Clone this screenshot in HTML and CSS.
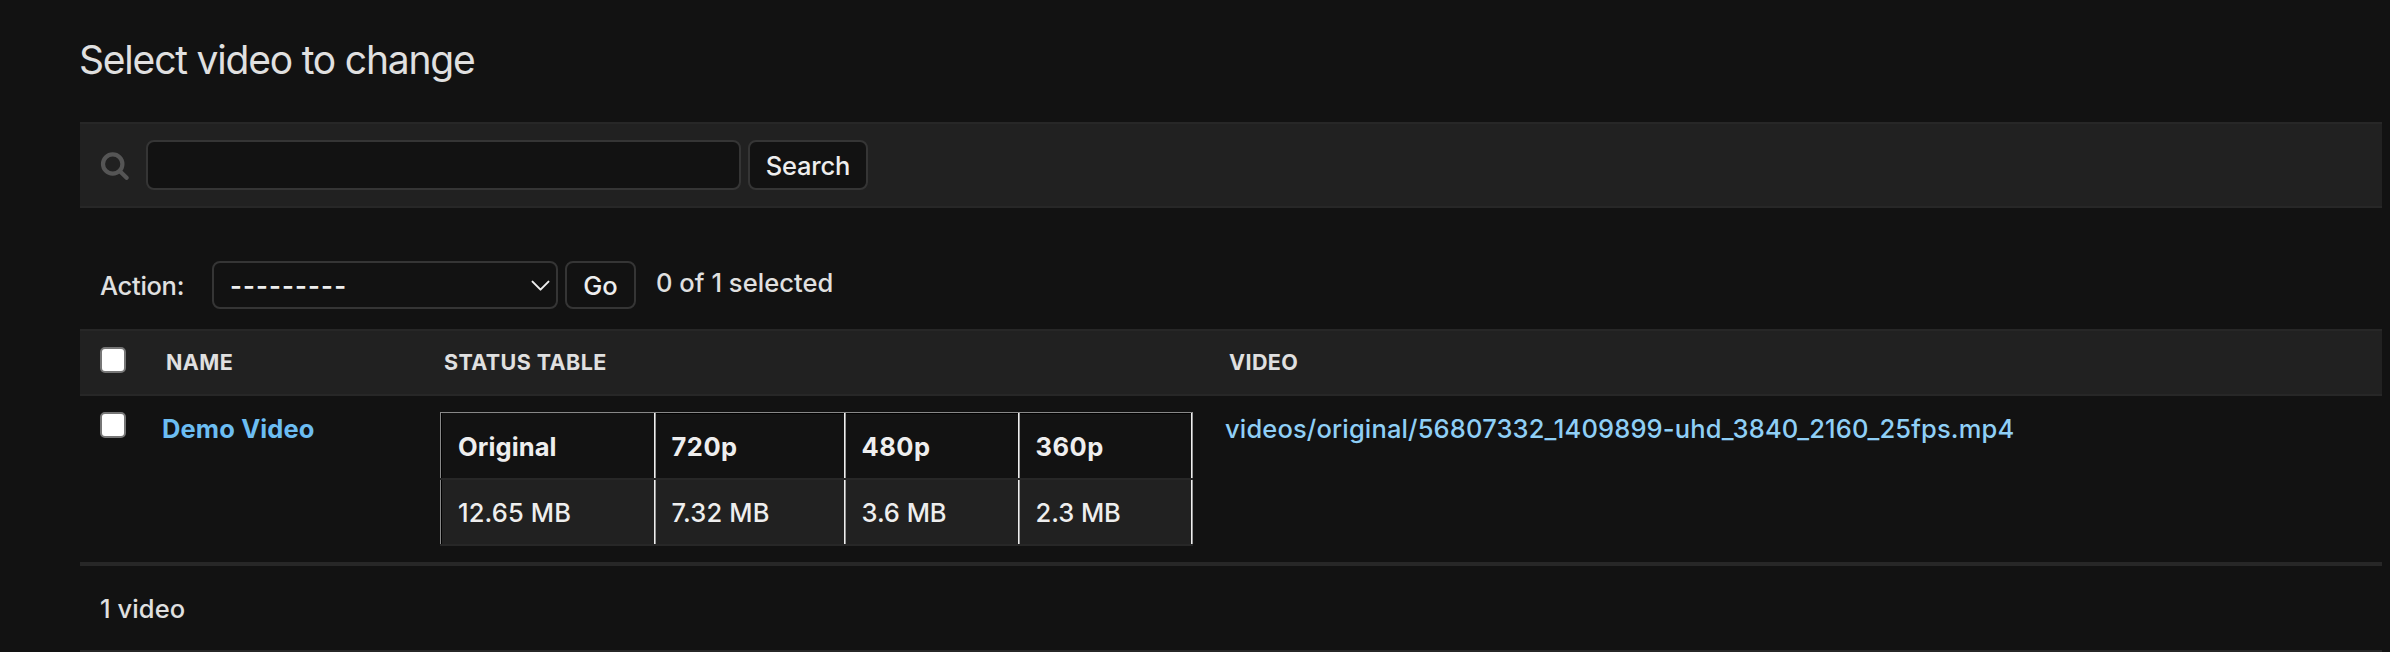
FILE: index.html
```html
<!DOCTYPE html>
<html lang="en">
<head>
<meta charset="utf-8">
<title>Select video to change</title>
<link rel="stylesheet" href="styles.css">
</head>
<body>
<main class="content">
  <h1 class="title">Select video to change</h1>
  <form class="toolbar">
    <svg class="search-icon" width="30" height="30" viewBox="0 0 30 30" fill="none" stroke="#555" stroke-width="4.2" stroke-linecap="round"><circle cx="12.7" cy="14" r="9.7"/><path d="M20.2 21.4 26.6 27.8"/></svg>
    <input class="search-input" type="text" aria-label="Search">
    <button class="button search-button" type="button">Search</button>
  </form>
  <div class="actions">
    <span class="action-label">Action:</span>
    <div class="select"><span class="dashes">---------</span><svg width="19" height="12" viewBox="0 0 19 12" fill="none" stroke="#eee" stroke-width="2" stroke-linecap="round" stroke-linejoin="round"><path d="M1.5 1.6 9.5 9.6 17.5 1.6"/></svg></div>
    <button class="button go-button" type="button">Go</button>
    <span class="counter">0 of 1 selected</span>
  </div>
  <div class="row head">
    <span class="check"></span>
    <span class="th">Name</span>
    <span class="th">Status table</span>
    <span class="th">Video</span>
  </div>
  <div class="row result">
    <span class="check"></span>
    <a class="name">Demo Video</a>
    <div class="status">
      <div class="status-row status-head"><span class="wide">Original</span><span>720p</span><span>480p</span><span>360p</span></div>
      <div class="status-row status-body"><span class="size">12.65 MB</span><span class="size">7.32 MB</span><span>3.6 MB</span><span>2.3 MB</span></div>
    </div>
    <a class="file">videos/original/56807332_1409899-uhd_3840_2160_25fps.mp4</a>
  </div>
  <p class="paginator">1 video</p>
</main>
</body>
</html>
```
FILE: styles.css
```css
* { box-sizing: border-box; }

body {
  margin: 0;
  height: 652px;
  overflow: hidden;
  background: #121212;
  color: #e0e0e0;
  font: 450 25.5px/30px Inter, Roboto, sans-serif;
}

.content { padding: 36px 8px 0 80px; }

.title {
  margin: 0 0 38px -1px;
  font-size: 39px;
  line-height: 48px;
  font-weight: 400;
  letter-spacing: -1.2px;
}

.toolbar {
  display: flex;
  align-items: flex-start;
  height: 86px;
  padding: 16px 18px;
  background: #212121;
  border: solid #272727;
  border-width: 2px 0;
}

.search-icon { margin: 10px 18px 0 2px; }

.search-input {
  width: 595px;
  height: 50px;
  margin: 0 7px 0 -2px;
  background: #121212;
  border: 2px solid #353535;
  border-radius: 8px;
}

.button {
  height: 50px;
  padding: 2px 0 0;
  background: #121212;
  border: 2px solid #353535;
  border-radius: 8px;
  color: #eee;
  font: inherit;
}

.search-button { width: 120px; letter-spacing: -0.2px; }

.actions {
  display: flex;
  align-items: flex-start;
  padding: 53px 0 20px 20px;
}

.action-label { width: 112px; padding-top: 10px; letter-spacing: -0.3px; }

.select {
  display: flex;
  justify-content: space-between;
  width: 346px;
  height: 48px;
  padding: 8px 6px 0 16px;
  border: 2px solid #353535;
  border-radius: 8px;
  color: #eee;
}

.select svg { margin-top: 9px; }

.dashes { font-weight: 600; letter-spacing: 1.15px; }

.go-button { width: 71px; height: 48px; margin: 0 20px 0 7px; letter-spacing: 0; }

.counter { padding-top: 7px; letter-spacing: 0.05px; }

.row {
  display: grid;
  grid-template-columns: 62px 278px 785px 1fr;
  align-items: start;
  padding-left: 20px;
}

.head {
  height: 67px;
  padding-top: 16px;
  background: #212121;
  border: solid #272727;
  border-width: 2px 0;
}

.check {
  width: 26px;
  height: 26px;
  background: #fff;
  border: 2px solid #767676;
  border-radius: 5px;
}

.th {
  padding: 2px 0 0 4px;
  font-size: 21.5px;
  line-height: 26px;
  font-weight: 650;
  text-transform: uppercase;
  letter-spacing: 0.4px;
}

.result { height: 170px; padding-top: 16px; border-bottom: 4px solid #272727; }

.name { padding-top: 2px; color: #6cbdf2; font-weight: 650; letter-spacing: 0.12px; }

.file { padding-top: 2px; color: #8fcff6; letter-spacing: 0.15px; }

.status { width: 753px; color: #eee; }

.status-row {
  display: grid;
  grid-template-columns: 216px 190px 174px 173px;
  border-bottom: 2px solid #272727;
}

.status-row span {
  padding: 18px 0 0 15.5px;
  border-right: 1px solid #999;
  box-shadow: inset -1px 0 0 #eee;
  letter-spacing: -0.05px;
}

.status-row span:first-child {
  padding-left: 17px;
  border-left: 1px solid #888;
  box-shadow: inset -1px 0 0 #eee, inset 1px 0 0 #000;
}

.status-head { grid-template-rows: 66px; font-weight: 650; }

.status-head span {
  padding-top: 19px;
  border-top: 1px solid #888;
  box-shadow: inset -1px 0 0 #eee, inset 0 1px 0 #000;
  letter-spacing: 0.5px;
}

.status-head .wide { letter-spacing: 0.1px; }

.status-body { grid-template-rows: 64px; background: #212121; }

.status-body .size { letter-spacing: 0.15px; }

.paginator {
  margin: 0;
  height: 86px;
  padding: 28px 0 0 20px;
  border-bottom: 2px solid #272727;
  letter-spacing: 0.1px;
}
```
